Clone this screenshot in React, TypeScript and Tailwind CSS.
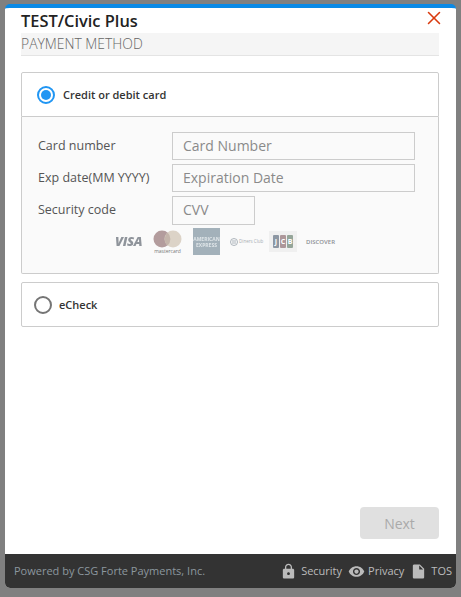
import { X } from "lucide-react"
import { MdInsertDriveFile, MdLock, MdVisibility } from "react-icons/md"

function Radio({ checked }: { checked?: boolean }) {
  if (checked) {
    return (
      <span className="flex h-[18px] w-[18px] items-center justify-center rounded-full border-2 border-[#2196f3] bg-white">
        <span className="h-[10px] w-[10px] rounded-full bg-[#2196f3]" />
      </span>
    )
  }
  return <span className="h-[18px] w-[18px] rounded-full border-2 border-[#757575] bg-white" />
}

function Field({ label, placeholder, narrow }: { label: string; placeholder: string; narrow?: boolean }) {
  return (
    <div className="flex items-center">
      <label className="w-[134px] shrink-0 text-[12.5px] text-[#555]">{label}</label>
      <div
        className={`flex items-center border border-[#ccc] bg-transparent px-[10px] pb-[2px] text-[14px] text-[#8a8a8a] ${
          narrow ? "h-[29px] w-[83px]" : "h-[28px] w-[243px]"
        }`}
      >
        {placeholder}
      </div>
    </div>
  )
}

function CardLogos() {
  return (
    <div className="mt-[3px] ml-[76px] flex h-[27px] items-center">
      <span className="ml-[1px] w-[28px] text-[13px] font-extrabold italic leading-none tracking-tight text-[#8f949b] [filter:blur(0.3px)]">
        VISA
      </span>
      <div className="ml-[10px] flex w-[29px] flex-col items-center">
        <svg width="29" height="18" viewBox="0 0 29 18">
          <circle cx="9" cy="9" r="8.5" fill="#b39c9d" />
          <circle cx="20" cy="9" r="8.5" fill="#dcd3c7" />
          <path d="M14.5 2.6a8.5 8.5 0 0 1 0 12.8a8.5 8.5 0 0 1 0-12.8z" fill="#c4b5ab" />
        </svg>
        <span className="text-[5px] leading-[6px] text-[#777]">mastercard</span>
      </div>
      <div className="ml-[11px] flex h-[27px] w-[27px] flex-col items-center justify-center bg-[#a3b1ba] text-center text-[5px] font-bold leading-[6px] text-[#dfe5e8] [filter:blur(0.3px)]">
        <span>AMERICAN</span>
        <span>EXPRESS</span>
      </div>
      <div className="ml-[10px] flex w-[29px] items-center gap-[1px]">
        <svg width="8" height="8" viewBox="0 0 8 8" className="shrink-0">
          <circle cx="4" cy="4" r="3.5" fill="none" stroke="#9aa3ac" strokeWidth="0.8" />
          <path d="M3 2v4M5 2v4" stroke="#9aa3ac" strokeWidth="0.8" />
        </svg>
        <span className="whitespace-nowrap text-[4.5px] text-[#a8adb3]">Diners Club</span>
      </div>
      <div className="ml-[10px] flex h-[21px] w-[28px] items-center justify-center bg-[#f0f0f0]">
        <div className="flex h-[13px] items-center justify-center gap-[1px] text-[7px] font-bold leading-none text-white">
          <span className="flex h-[13px] w-[6px] items-center justify-center rounded-[1px] bg-[#8d97a3]">J</span>
          <span className="flex h-[13px] w-[6px] items-center justify-center rounded-[1px] bg-[#ad979a]">C</span>
          <span className="flex h-[13px] w-[6px] items-center justify-center rounded-[1px] bg-[#95a599]">B</span>
        </div>
      </div>
      <span className="ml-[9px] text-[6px] font-semibold leading-none text-[#8b8f94]">DISCOVER</span>
    </div>
  )
}

export default function App() {
  return (
    <div className="flex h-[597px] w-[461px] flex-col overflow-hidden bg-[#808080] px-[5px] pt-[4px] pb-[9px] font-['Open_Sans',sans-serif]">
      <div className="flex flex-1 flex-col overflow-hidden rounded-[5px] border-t-4 border-[#0a8ae6] bg-white">
        <div className="relative flex-1 px-4">
          <h1 className="mt-[4px] text-[16.4px] font-semibold leading-[18px] text-[#222]">TEST/Civic Plus</h1>
          <X className="absolute top-[-1px] right-[11px] h-[22px] w-[22px] text-[#d93a0e]" strokeWidth={1.7} />
          <h2 className="mt-[3px] mr-[1px] h-[23px] border-b border-[#e4e4e4] bg-[#f5f5f5] text-[13.9px] font-light leading-[22px] text-[#666]">
            PAYMENT METHOD
          </h2>

          <div className="mt-[16px] mr-[1px]">
            <div className="flex h-[45px] items-center gap-[8px] rounded-t-[2px] border border-[#ccc] pl-[15px] text-[11px] font-semibold text-[#333]">
              <Radio checked />
              <span className="mt-[1px]">Credit or debit card</span>
            </div>
            <div className="flex h-[157px] flex-col rounded-b-[2px] border border-t-0 border-[#ccc] bg-[#fafafa] pt-[15px] pl-[16px]">
              <div className="flex flex-col gap-[4px]">
                <Field label="Card number" placeholder="Card Number" />
                <Field label="Exp date(MM YYYY)" placeholder="Expiration Date" />
                <Field label="Security code" placeholder="CVV" narrow />
              </div>
              <CardLogos />
            </div>
            <div className="mt-[8px] flex h-[45px] items-center gap-[7px] rounded-[2px] border border-[#ccc] pl-[12px] text-[11px] font-semibold text-[#333]">
              <Radio />
              <span className="mt-[1px]">eCheck</span>
            </div>
          </div>
        </div>

        <div className="flex justify-end pr-[17px] pb-[15px]">
          <button className="h-[32px] w-[79px] rounded-[4px] bg-[#e0e0e0] text-[14px] text-[#aaa]">Next</button>
        </div>

        <div className="flex h-[34px] items-center justify-between bg-[#333] pr-[4px] pl-[9px] text-[11px]">
          <span className="text-[#8c979e]">Powered by CSG Forte Payments, Inc.</span>
          <div className="flex items-center text-[#bbb]">
            <MdLock className="h-[17px] w-[17px]" />
            <span className="ml-[4px]">Security</span>
            <MdVisibility className="ml-[6px] h-[17px] w-[17px]" />
            <span className="ml-[3px]">Privacy</span>
            <MdInsertDriveFile className="ml-[6px] h-[17px] w-[17px]" />
            <span className="ml-[4px]">TOS</span>
          </div>
        </div>
      </div>
    </div>
  )
}
